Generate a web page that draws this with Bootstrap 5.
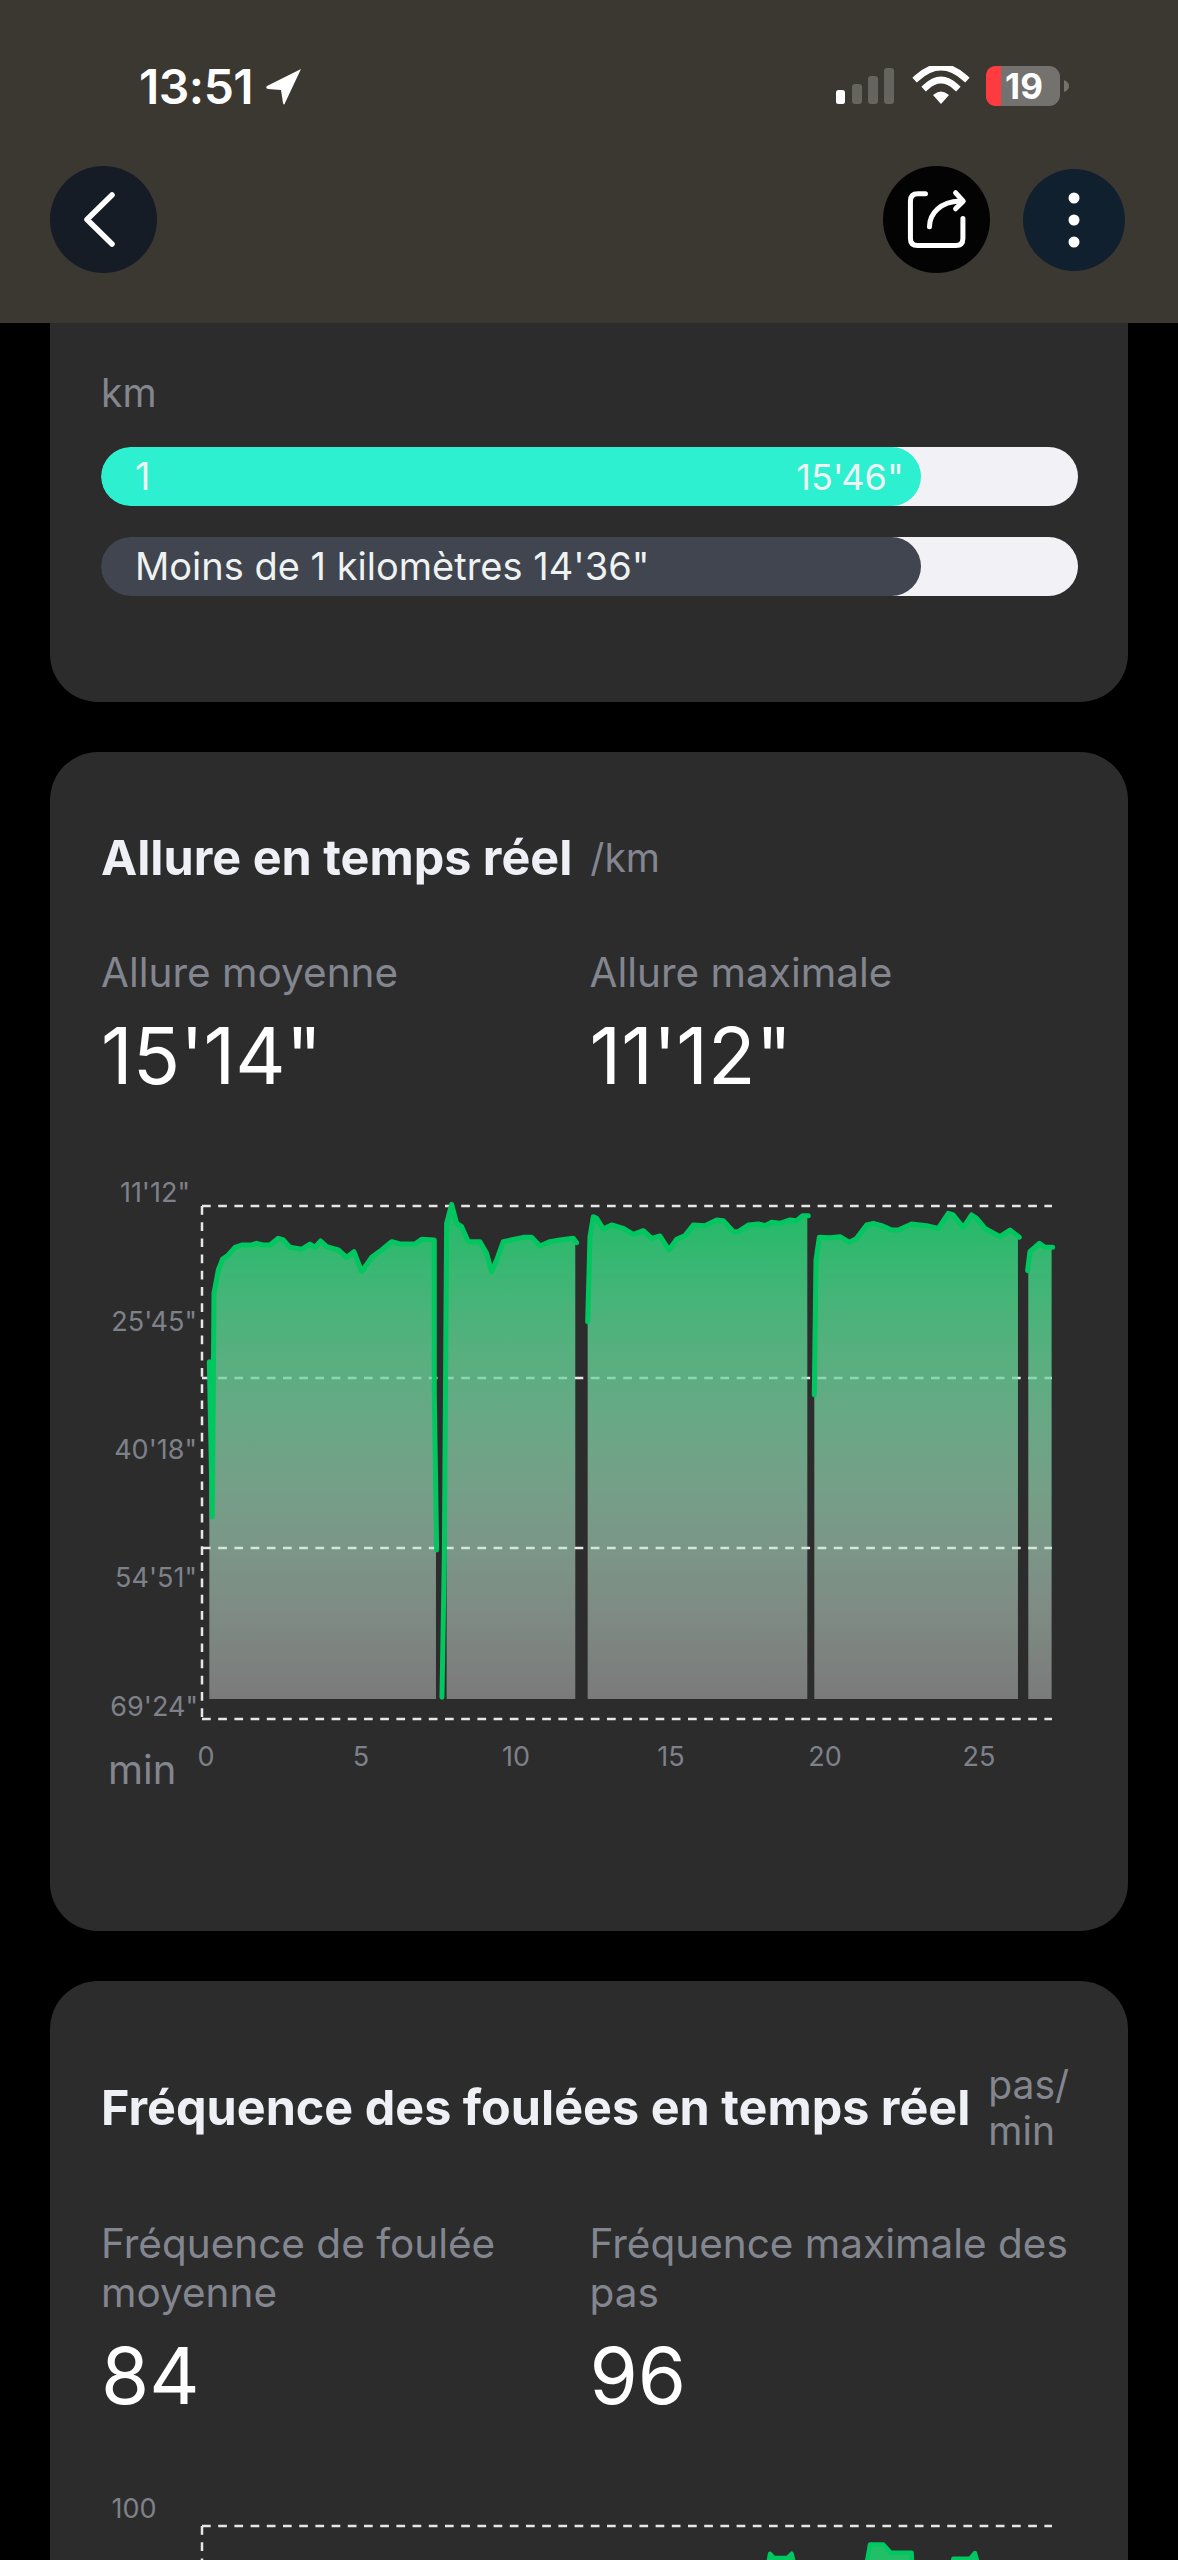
<!DOCTYPE html>
<html lang="fr">
<head>
    <meta charset="UTF-8">
    <meta name="viewport" content="width=device-width, initial-scale=1.0">
    <title>Allure</title>
    <link href="https://cdn.jsdelivr.net/npm/bootstrap@5.3.0/dist/css/bootstrap.min.css" rel="stylesheet">
    <style>
        html, body { height: 2560px; overflow: hidden; }
        body { background: #000; font-family: Inter, "Liberation Sans", sans-serif; color: #fff; }

        /* Top bar */
        .top-bar { height: 323px; background: #3b3832; padding: 0 53px 0 50px; }
        .status-row { height: 166px; padding-top: 61px; align-items: flex-start; }
        .clock { font-size: 48px; line-height: 52px; font-weight: 600; margin-left: 89px; letter-spacing: -.5px; }
        .clock-arrow { margin-left: 12px; }
        .status-icons { margin: 5px 55px 0 0; }
        .round-btn { width: 107px; height: 107px; border-radius: 50%; padding: 0; border: 0; flex: none; }
        .btn-back { background: #161c26; }
        .btn-share { background: #030303; margin-right: 33px; }
        .btn-more { background: #11202f; width: 102px; height: 102px; }
        .battery-num { font-size: 35px; font-weight: 700; fill: #fff; font-family: Inter, "Liberation Sans", sans-serif; }

        /* Cards */
        .run-card { background: #2c2c2c; border: 0; border-radius: 48px; color: #fff; }
        .run-card .card-body { padding: 81px 50px 0 51px; }
        .first-card { height: 379px; border-top-left-radius: 0; border-top-right-radius: 0; }
        .first-card .card-body { padding-top: 47px; }
        .pace-card { height: 1179px; }
        .card-stack { padding: 0 50px; gap: 50px; }
        .unit-text { font-size: 39px; line-height: 46px; color: #83868f; }
        .title-row { gap: 18px; }
        .card-title-text { font-size: 48.5px; line-height: 50px; font-weight: 700; color: #eef0f5; margin: 0; white-space: nowrap; }
        .stat-label { font-size: 40.5px; line-height: 49px; color: #83868f; margin-top: 65px; }
        .stat-value { font-size: 78px; line-height: 90px; color: #fff; margin-top: 14px; }

        /* Lap bars: the light track only shows past the filled part */
        .lap-bar { height: 59px; border-radius: 30px; background: linear-gradient(to right, transparent 50%, #f2f2f6 50%); margin-top: 31px; }
        .lap-bar .progress-bar { border-radius: 30px; color: #eef2f0; padding: 0 17px 0 34px; font-size: 38px; white-space: nowrap; }
        .lap-time { font-size: 36px; }
        .lap-mine { background: #2cf0d0; }
        .lap-avg { background: #40454f; }

        /* Charts */
        .chart-svg { display: block; width: 977px; margin-top: 69px; overflow: visible; }
        .axis-text { font-size: 27px; fill: #7e818a; font-family: Inter, "Liberation Sans", sans-serif; }
        .axis-unit { font-size: 40px; fill: #83868f; font-family: Inter, "Liberation Sans", sans-serif; }
        .grid-line { stroke: #e6e6e6; stroke-width: 2.5; stroke-dasharray: 8.7 7.5; fill: none; }
        .pace-fill { fill: url(#paceFill); }
        .pace-line { fill: none; stroke: #00c75f; stroke-width: 15; stroke-linejoin: round; stroke-linecap: round; }
        .cadence-peak { fill: #22bf68; stroke: #00c75f; stroke-width: 13; stroke-linejoin: round; }
    </style>
</head>
<body>
    <header class="top-bar">
        <div class="status-row d-flex justify-content-between">
            <div class="d-flex align-items-center">
                <span class="clock">13:51</span>
                <svg class="clock-arrow" width="38" height="38" viewBox="0 0 38 38">
                    <path d="M36 1 L2 18 Q0 20 3 21 L16 22 L18 35 Q19 38 20 35 Z" fill="#fff"/>
                </svg>
            </div>
            <!-- signal, wifi, battery -->
            <svg class="status-icons" width="234" height="42" viewBox="836 66 234 42">
                <rect x="836" y="90" width="9" height="14" rx="2.5" fill="#fff"/>
                <rect x="852" y="84" width="10" height="20" rx="3" fill="#65645f"/>
                <rect x="868" y="76" width="10" height="28" rx="3" fill="#65645f"/>
                <rect x="884" y="68" width="10" height="36" rx="3" fill="#65645f"/>
                <path d="M917 78 Q941 56 965 78" fill="none" stroke="#fff" stroke-width="6.5" stroke-linecap="square"/>
                <path d="M926 87 Q941 73 956 87" fill="none" stroke="#fff" stroke-width="6.5" stroke-linecap="square"/>
                <path d="M933 95 Q941 88 949 95 L941 104 Z" fill="#fff"/>
                <rect x="986" y="66" width="74" height="40" rx="11" fill="#73726e"/>
                <path d="M1001 66 H997 Q986 66 986 77 V95 Q986 106 997 106 H1001 Z" fill="#ff3b3f"/>
                <path d="M1064 80 Q1069 82 1069 86 Q1069 90 1064 92 Z" fill="#73726e"/>
                <text x="1024" y="99" text-anchor="middle" class="battery-num">19</text>
            </svg>
        </div>
        <nav class="d-flex align-items-center">
            <button type="button" class="btn round-btn btn-back me-auto d-flex align-items-center justify-content-center">
                <svg width="107" height="107" viewBox="0 0 107 107">
                    <path d="M62 29 L37 53.5 L62 78" fill="none" stroke="#fff" stroke-width="5.5" stroke-linecap="round" stroke-linejoin="round"/>
                </svg>
            </button>
            <button type="button" class="btn round-btn btn-share d-flex align-items-center justify-content-center">
                <svg width="107" height="107" viewBox="68 48 320 320">
                    <g fill="none" stroke="#fff" stroke-width="15" stroke-linecap="round" stroke-linejoin="round">
                        <path d="M195 131 H172 Q150 131 150 153 V265 Q150 286 172 286 H286 Q307 286 307 265 V205"/>
                        <path d="M207 230 C207 190 240 155 298 153"/>
                        <path d="M285 128 L308 153 L285 176"/>
                    </g>
                </svg>
            </button>
            <button type="button" class="btn round-btn btn-more d-flex align-items-center justify-content-center">
                <svg width="102" height="102" viewBox="0 0 102 102">
                    <circle cx="51" cy="29" r="5.5" fill="#fff"/>
                    <circle cx="51" cy="51" r="5.5" fill="#fff"/>
                    <circle cx="51" cy="73" r="5.5" fill="#fff"/>
                </svg>
            </button>
        </nav>
    </header>

    <main class="card-stack d-flex flex-column">
        <!-- Laps -->
        <section class="card run-card first-card">
            <div class="card-body">
                <div class="unit-text">km</div>
                <div class="progress lap-bar">
                    <div class="progress-bar lap-mine d-flex flex-row justify-content-between align-items-center" style="width:83.9%">
                        <span>1</span><span class="lap-time">15'46"</span>
                    </div>
                </div>
                <div class="progress lap-bar">
                    <div class="progress-bar lap-avg d-flex flex-row justify-content-start align-items-center" style="width:83.9%">
                        <span>Moins de 1 kilomètres 14'36"</span>
                    </div>
                </div>
            </div>
        </section>

        <!-- Pace -->
        <section class="card run-card pace-card">
            <div class="card-body">
                <div class="d-flex align-items-center title-row">
                    <h2 class="card-title-text">Allure en temps réel</h2>
                    <span class="unit-text">/km</span>
                </div>
                <div class="row g-0">
                    <div class="col-6">
                        <div class="stat-label">Allure moyenne</div>
                        <div class="stat-value">15'14"</div>
                    </div>
                    <div class="col-6">
                        <div class="stat-label">Allure maximale</div>
                        <div class="stat-value">11'12"</div>
                    </div>
                </div>
                <svg class="chart-svg" height="620" viewBox="101 1170 977 620">
                    <defs>
                        <!-- runs in the units of the lap groups below -->
                        <linearGradient id="paceFill" gradientUnits="userSpaceOnUse" x1="0" y1="138" x2="0" y2="1617">
                            <stop offset="0" stop-color="#1fbf68" stop-opacity=".97"/>
                            <stop offset="1" stop-color="#fff" stop-opacity=".37"/>
                        </linearGradient>
                    </defs>
                    <path class="grid-line" d="M202 1206 H1052"/>
                    <path class="grid-line" d="M202 1378 H1052"/>
                    <path class="grid-line" d="M202 1548 H1052"/>
                    <path class="grid-line" d="M202 1719 H1052"/>
                    <path class="grid-line" d="M202 1206 V1719"/>

                    <text class="axis-text" x="190" y="1202" text-anchor="end">11'12"</text>
                    <text class="axis-text" x="197" y="1331" text-anchor="end">25'45"</text>
                    <text class="axis-text" x="197" y="1459" text-anchor="end">40'18"</text>
                    <text class="axis-text" x="197" y="1587" text-anchor="end">54'51"</text>
                    <text class="axis-text" x="198" y="1716" text-anchor="end">69'24"</text>

                    <text class="axis-text" x="206" y="1766" text-anchor="middle">0</text>
                    <text class="axis-text" x="361" y="1766" text-anchor="middle">5</text>
                    <text class="axis-text" x="516" y="1766" text-anchor="middle">10</text>
                    <text class="axis-text" x="671" y="1766" text-anchor="middle">15</text>
                    <text class="axis-text" x="825" y="1766" text-anchor="middle">20</text>
                    <text class="axis-text" x="979" y="1766" text-anchor="middle">25</text>
                    <text class="axis-unit" x="108" y="1784">min</text>

                    <!-- first two laps, units are 1/3 px from (80,1160) -->
                    <g transform="translate(80 1160) scale(.3333)">
                        <path class="pace-fill" d="M388 1617 V605 L397 1070 L402 400 L415 330 L428 297 L445 285 L465 262 L485 255 L515 255 L530 250 L550 255 L570 255 L595 235 L610 240 L630 262 L665 268 L690 252 L705 262 L722 243 L740 260 L775 270 L800 292 L822 275 L845 335 L875 292 L905 270 L935 245 L960 252 L1005 252 L1025 238 L1068 240 V1617 Z"/>
                        <path class="pace-fill" d="M1100 1617 V190 L1115 133 L1130 190 L1145 200 L1165 245 L1200 245 L1220 280 L1235 335 L1250 300 L1270 245 L1330 232 L1355 232 L1380 258 L1410 245 L1440 240 L1486 235 V1617 Z"/>
                        <path class="pace-line" d="M388 605 L397 1070 L402 400 L415 330 L428 297 L445 285 L465 262 L485 255 L515 255 L530 250 L550 255 L570 255 L595 235 L610 240 L630 262 L665 268 L690 252 L705 262 L722 243 L740 260 L775 270 L800 292 L822 275 L845 335 L875 292 L905 270 L935 245 L960 252 L1005 252 L1025 238 L1063 240 L1063 700 L1070 1170"/>
                        <path class="pace-line" d="M1086 1612 L1093 1200 L1100 190 L1115 133 L1130 190 L1145 200 L1165 245 L1200 245 L1220 280 L1235 335 L1250 300 L1270 245 L1330 232 L1355 232 L1380 258 L1410 245 L1440 240 L1480 235 L1490 248"/>
                    </g>
                    <!-- last three laps, units are 1/3 px from (580,1160) -->
                    <g transform="translate(580 1160) scale(.3333)">
                        <path class="pace-fill" d="M23 1617 V485 L30 230 L40 170 L50 175 L70 207 L95 195 L130 205 L160 223 L190 212 L215 235 L240 228 L267 270 L290 238 L315 227 L340 195 L375 197 L410 180 L430 182 L460 215 L475 215 L505 195 L535 192 L555 197 L575 187 L600 190 L630 180 L650 182 L668 167 L682 167 V1617 Z"/>
                        <path class="pace-fill" d="M703 1617 V705 L708 300 L718 232 L750 233 L780 230 L808 247 L830 235 L860 195 L880 190 L905 197 L935 210 L955 210 L995 192 L1040 197 L1075 205 L1105 160 L1120 165 L1150 203 L1175 165 L1190 175 L1215 205 L1260 230 L1290 210 L1314 230 V1617 Z"/>
                        <path class="pace-fill" d="M1345 1617 V332 L1350 275 L1378 250 L1395 262 L1415 262 V1617 Z"/>
                        <path class="pace-line" d="M23 485 L30 230 L40 170 L50 175 L70 207 L95 195 L130 205 L160 223 L190 212 L215 235 L240 228 L267 270 L290 238 L315 227 L340 195 L375 197 L410 180 L430 182 L460 215 L475 215 L505 195 L535 192 L555 197 L575 187 L600 190 L630 180 L650 182 L668 167 L685 167"/>
                        <path class="pace-line" d="M703 705 L708 300 L718 232 L750 233 L780 230 L808 247 L830 235 L860 195 L880 190 L905 197 L935 210 L955 210 L995 192 L1040 197 L1075 205 L1105 160 L1120 165 L1150 203 L1175 165 L1190 175 L1215 205 L1260 230 L1290 210 L1318 232"/>
                        <path class="pace-line" d="M1343 332 L1350 275 L1378 250 L1395 262 L1418 262"/>
                    </g>
                </svg>
            </div>
        </section>

        <!-- Cadence -->
        <section class="card run-card">
            <div class="card-body">
                <div class="d-flex align-items-center title-row">
                    <h2 class="card-title-text">Fréquence des foulées en temps réel</h2>
                    <span class="unit-text">pas/<br>min</span>
                </div>
                <div class="row g-0">
                    <div class="col-6">
                        <div class="stat-label">Fréquence de foulée moyenne</div>
                        <div class="stat-value">84</div>
                    </div>
                    <div class="col-6">
                        <div class="stat-label">Fréquence maximale des pas</div>
                        <div class="stat-value">96</div>
                    </div>
                </div>
                <svg class="chart-svg" height="120" viewBox="101 2488 977 120">
                    <path class="grid-line" d="M202 2524 H1052"/>
                    <path class="grid-line" d="M202 2524 V2600"/>
                    <text class="axis-text" x="134" y="2516" text-anchor="middle">100</text>
                    <g transform="translate(700 2480) scale(.3333)">
                        <path class="cadence-peak" d="M195 300 L210 215 L222 228 L262 228 L275 215 L295 300 Z"/>
                        <path class="cadence-peak" d="M490 300 L510 187 L550 187 L572 212 L635 212 L640 300 Z"/>
                        <path class="cadence-peak" d="M750 300 L760 230 L810 230 L825 213 L850 300 Z"/>
                    </g>
                </svg>
            </div>
        </section>
    </main>

    <script src="https://cdn.jsdelivr.net/npm/bootstrap@5.3.0/dist/js/bootstrap.bundle.min.js"></script>
</body>
</html>
